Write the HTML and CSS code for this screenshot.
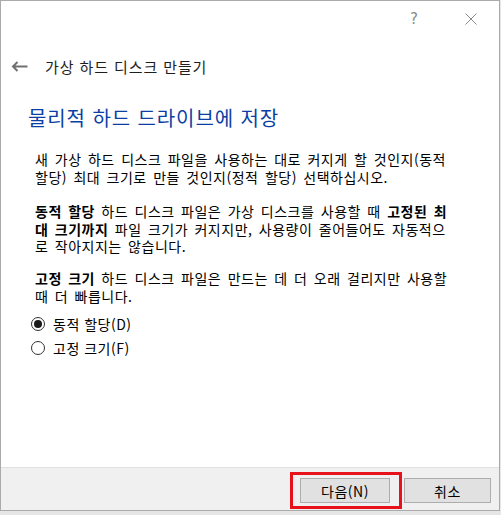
FILE: index.html
```html
<!DOCTYPE html>
<html lang="ko">
<head>
<meta charset="utf-8">
<title>가상 하드 디스크 만들기</title>
<link rel="stylesheet" href="styles.css">
</head>
<body>
<div class="window">
  <div class="titlebar">
    <span class="tb-btn help">?</span>
    <span class="tb-btn close">
      <svg width="12" height="12" viewBox="0 0 12 12"><path d="M0.5 0.5 L11.5 11.5 M11.5 0.5 L0.5 11.5" stroke="#8a8a8a" stroke-width="1" fill="none"/></svg>
    </span>
  </div>
  <div class="header">
    <span class="back">
      <svg width="17" height="11" viewBox="0 0 17 11"><path d="M16.5 5.5 H2 M6.5 1 L2 5.5 L6.5 10" stroke="#707070" stroke-width="2" fill="none"/></svg>
    </span>
    <span class="wizard-title">가상 하드 디스크 만들기</span>
  </div>
  <div class="content">
    <h1 class="page-heading">물리적 하드 드라이브에 저장</h1>
    <p class="para p1">새 가상 하드 디스크 파일을 사용하는 대로 커지게 할 것인지(동적<br>할당) 최대 크기로 만들 것인지(정적 할당) 선택하십시오.</p>
    <p class="para p2"><b>동적 할당</b> 하드 디스크 파일은 가상 디스크를 사용할 때 <b>고정된 최</b><br><b>대 크기까지</b> 파일 크기가 커지지만, 사용량이 줄어들어도 자동적으<br>로 작아지지는 않습니다.</p>
    <p class="para p3"><b>고정 크기</b> 하드 디스크 파일은 만드는 데 더 오래 걸리지만 사용할<br>때 더 빠릅니다.</p>
    <div class="radio-row"><span class="radio checked"></span><span class="radio-label">동적 할당(D)</span></div>
    <div class="radio-row"><span class="radio"></span><span class="radio-label">고정 크기(F)</span></div>
  </div>
  <div class="footer">
    <span class="btn primary">다음(N)<span class="highlight"></span></span>
    <span class="btn">취소</span>
  </div>
</div>
</body>
</html>
```
FILE: styles.css
```css
html, body {
  margin: 0;
  padding: 0;
}
body {
  background: #e6e6e6;
  font-family: "Noto Sans CJK KR", "Noto Sans", sans-serif;
  color: #000;
}
.window {
  width: 500px;
  height: 511px;
  box-sizing: border-box;
  border: 1px solid #aaaaaa;
  background: #fff;
  display: flex;
  flex-direction: column;
}
.titlebar {
  height: 36px;
  display: flex;
  justify-content: flex-end;
  align-items: center;
  gap: 23px;
  padding-right: 11px;
}
.tb-btn {
  width: 34px;
  height: 20px;
  display: flex;
  align-items: center;
  justify-content: center;
  color: #8a8a8a;
  font-family: "DejaVu Sans", sans-serif;
  font-size: 15px;
}
.header {
  margin-top: 14px;
  height: 30px;
  display: flex;
  align-items: center;
  padding-left: 10px;
}
.back {
  width: 17px;
  height: 11px;
  display: flex;
}
.wizard-title {
  margin-left: 17px;
  font-size: 15px;
  color: #1e1e1e;
  letter-spacing: 0.9px;
}
.content {
  padding-left: 27px;
}
.page-heading {
  margin: 23px 0 0 0;
  font-size: 20px;
  line-height: 28px;
  font-weight: normal;
  color: #0b3fa5;
  letter-spacing: 0.9px;
}
.para {
  margin: 19px 0 0 7px;
  font-size: 14px;
  line-height: 17.5px;
  letter-spacing: 0.5px;
  word-spacing: 2px;
  white-space: nowrap;
}
.para b {
  font-weight: bold;
  display: inline-block;
  line-height: 17.5px;
  vertical-align: top;
}
.p2 {
  margin-top: 17px;
}
.p3 {
  margin-top: 14.5px;
}
.radio-row {
  height: 24px;
  display: flex;
  align-items: center;
  padding-left: 3px;
  font-size: 14px;
  letter-spacing: 0.5px;
}
.p3 + .radio-row {
  margin-top: 7px;
}
.radio {
  width: 14px;
  height: 14px;
  box-sizing: border-box;
  border: 1px solid #333;
  border-radius: 50%;
  display: flex;
  align-items: center;
  justify-content: center;
  background: #fff;
}
.radio.checked::after {
  content: "";
  width: 8px;
  height: 8px;
  border-radius: 50%;
  background: #1a1a1a;
}
.radio-label {
  margin-left: 8px;
}
.footer {
  margin-top: auto;
  height: 43px;
  box-sizing: border-box;
  border-top: 1px solid #dfdfdf;
  background: #f0f0f0;
  display: flex;
  justify-content: flex-end;
  align-items: flex-start;
  gap: 14px;
  padding: 10px 8px 0 0;
}
.btn {
  position: relative;
  width: 87px;
  height: 25px;
  box-sizing: border-box;
  border: 1px solid #adadad;
  background: #e1e1e1;
  display: flex;
  align-items: center;
  justify-content: center;
  font-size: 14px;
  letter-spacing: 0.5px;
}
.btn.primary {
  width: 90px;
}
.highlight {
  position: absolute;
  top: -7px;
  left: -11px;
  right: -13px;
  bottom: -7px;
  border: 3px solid #e8121b;
}
```
